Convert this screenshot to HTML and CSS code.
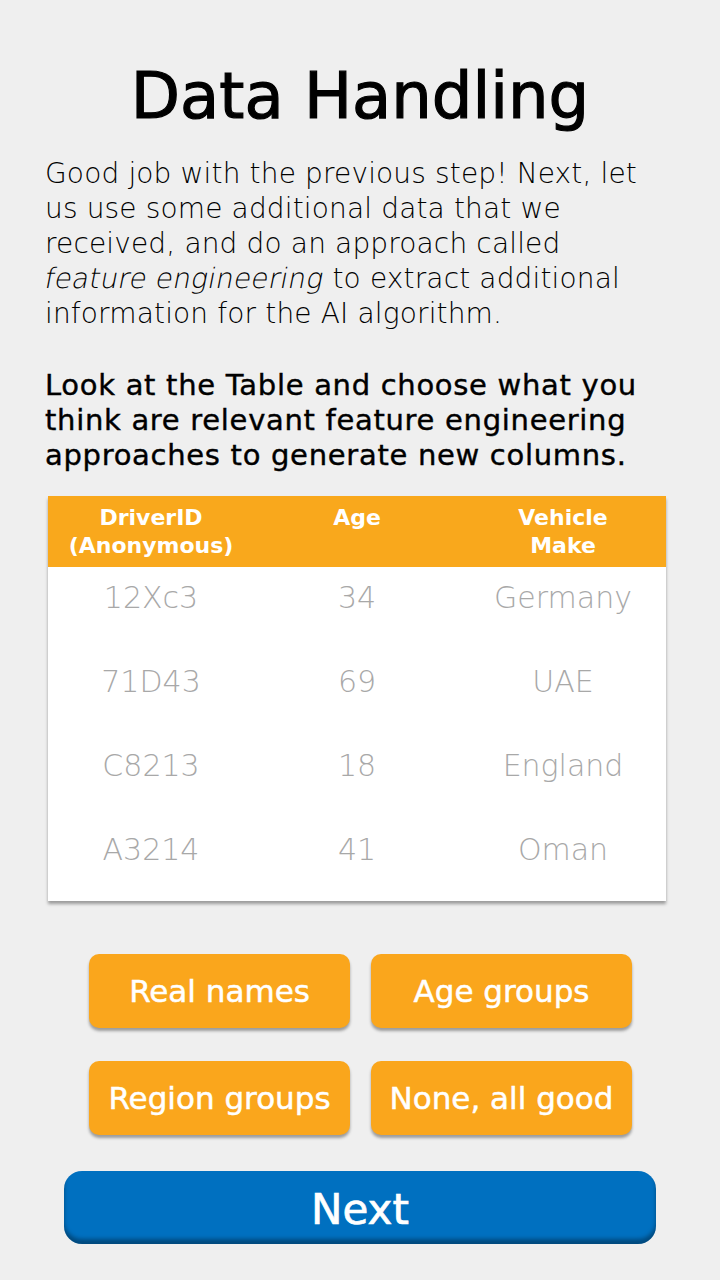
FILE: index.html
```html
<!DOCTYPE html>
<html lang="en">
<head>
<meta charset="utf-8">
<title>Data Handling</title>
<link rel="stylesheet" href="styles.css">
</head>
<body>
<main class="screen">
  <h1 class="title">Data Handling</h1>
  <p class="intro">Good job with the previous step! Next, let us use some additional data that we received, and do an approach called <em>feature engineering</em> to extract additional information for the AI algorithm.</p>
  <p class="prompt">Look at the Table and choose what you think are relevant feature engineering approaches to generate new columns.</p>
  <div class="table">
    <div class="row head">
      <div class="cell">DriverID<br>(Anonymous)</div>
      <div class="cell">Age</div>
      <div class="cell">Vehicle<br>Make</div>
    </div>
    <div class="row"><div class="cell">12Xc3</div><div class="cell">34</div><div class="cell">Germany</div></div>
    <div class="row"><div class="cell">71D43</div><div class="cell">69</div><div class="cell">UAE</div></div>
    <div class="row"><div class="cell">C8213</div><div class="cell">18</div><div class="cell">England</div></div>
    <div class="row"><div class="cell">A3214</div><div class="cell">41</div><div class="cell">Oman</div></div>
  </div>
  <div class="choices">
    <button class="choice">Real names</button>
    <button class="choice">Age groups</button>
    <button class="choice">Region groups</button>
    <button class="choice">None, all good</button>
  </div>
  <button class="next">Next</button>
</main>
</body>
</html>
```

FILE: styles.css
```css
html, body {
  margin: 0;
  padding: 0;
  background: #efefef;
}
.screen {
  width: 720px;
  height: 1280px;
  box-sizing: border-box;
  padding: 56px 0 0 0;
  font-family: "DejaVu Sans", "Open Sans", sans-serif;
  color: #000;
  display: flex;
  flex-direction: column;
}
.title {
  margin: 0;
  text-align: center;
  font-size: 64px;
  font-weight: 400;
  line-height: 80px;
  -webkit-text-stroke: 1.2px #000;
}
.intro {
  margin: 20px 0 0 45px;
  width: 606px;
  font-size: 28px;
  font-weight: 200;
  line-height: 35px;
  letter-spacing: 0.15px;
}
.intro em {
  display: inline-block;
  font-style: normal;
  transform: skewX(-11deg);
}
.prompt {
  margin: 37px 0 0 45px;
  width: 655px;
  font-size: 29px;
  font-weight: 400;
  line-height: 35px;
  letter-spacing: 0.7px;
  -webkit-text-stroke: 0.4px #000;
}
.table {
  margin: 23px 0 0 48px;
  width: 618px;
  background: #fff;
  box-shadow: 0 3px 3px rgba(0, 0, 0, 0.35);
}
.row {
  display: grid;
  grid-template-columns: 1fr 1fr 1fr;
  height: 84px;
  align-items: start;
}
.row .cell {
  text-align: center;
  font-size: 30px;
  font-weight: 200;
  color: #a8a8a8;
  line-height: 62px;
}
.row.head {
  height: 71px;
  box-sizing: border-box;
  padding-top: 8px;
  background: #f9a81c;
}
.row.head .cell {
  color: #fff;
  font-size: 22px;
  font-weight: 700;
  line-height: 28px;
}
.table .row:last-child {
  height: 82px;
}
.choices {
  margin: 53px 0 0 89px;
  width: 543px;
  display: grid;
  grid-template-columns: 261px 261px;
  column-gap: 21px;
  row-gap: 33px;
}
.choice {
  height: 74px;
  padding: 0;
  border: none;
  border-radius: 10px;
  background: #faa61c;
  color: #fff;
  font-family: inherit;
  font-size: 31px;
  font-weight: 400;
  -webkit-text-stroke: 0.5px #fff;
  white-space: nowrap;
  box-shadow: 0 3px 3px rgba(0, 0, 0, 0.35);
}
.next {
  margin: 36px 0 0 64px;
  width: 592px;
  height: 73px;
  padding: 4px 0 0 0;
  border: none;
  border-radius: 18px;
  background: #0070c0;
  color: #fff;
  font-family: inherit;
  font-size: 42px;
  font-weight: 400;
  -webkit-text-stroke: 0.7px #fff;
  box-shadow: inset 0 -5px 4px rgba(0, 0, 0, 0.35);
}
```
